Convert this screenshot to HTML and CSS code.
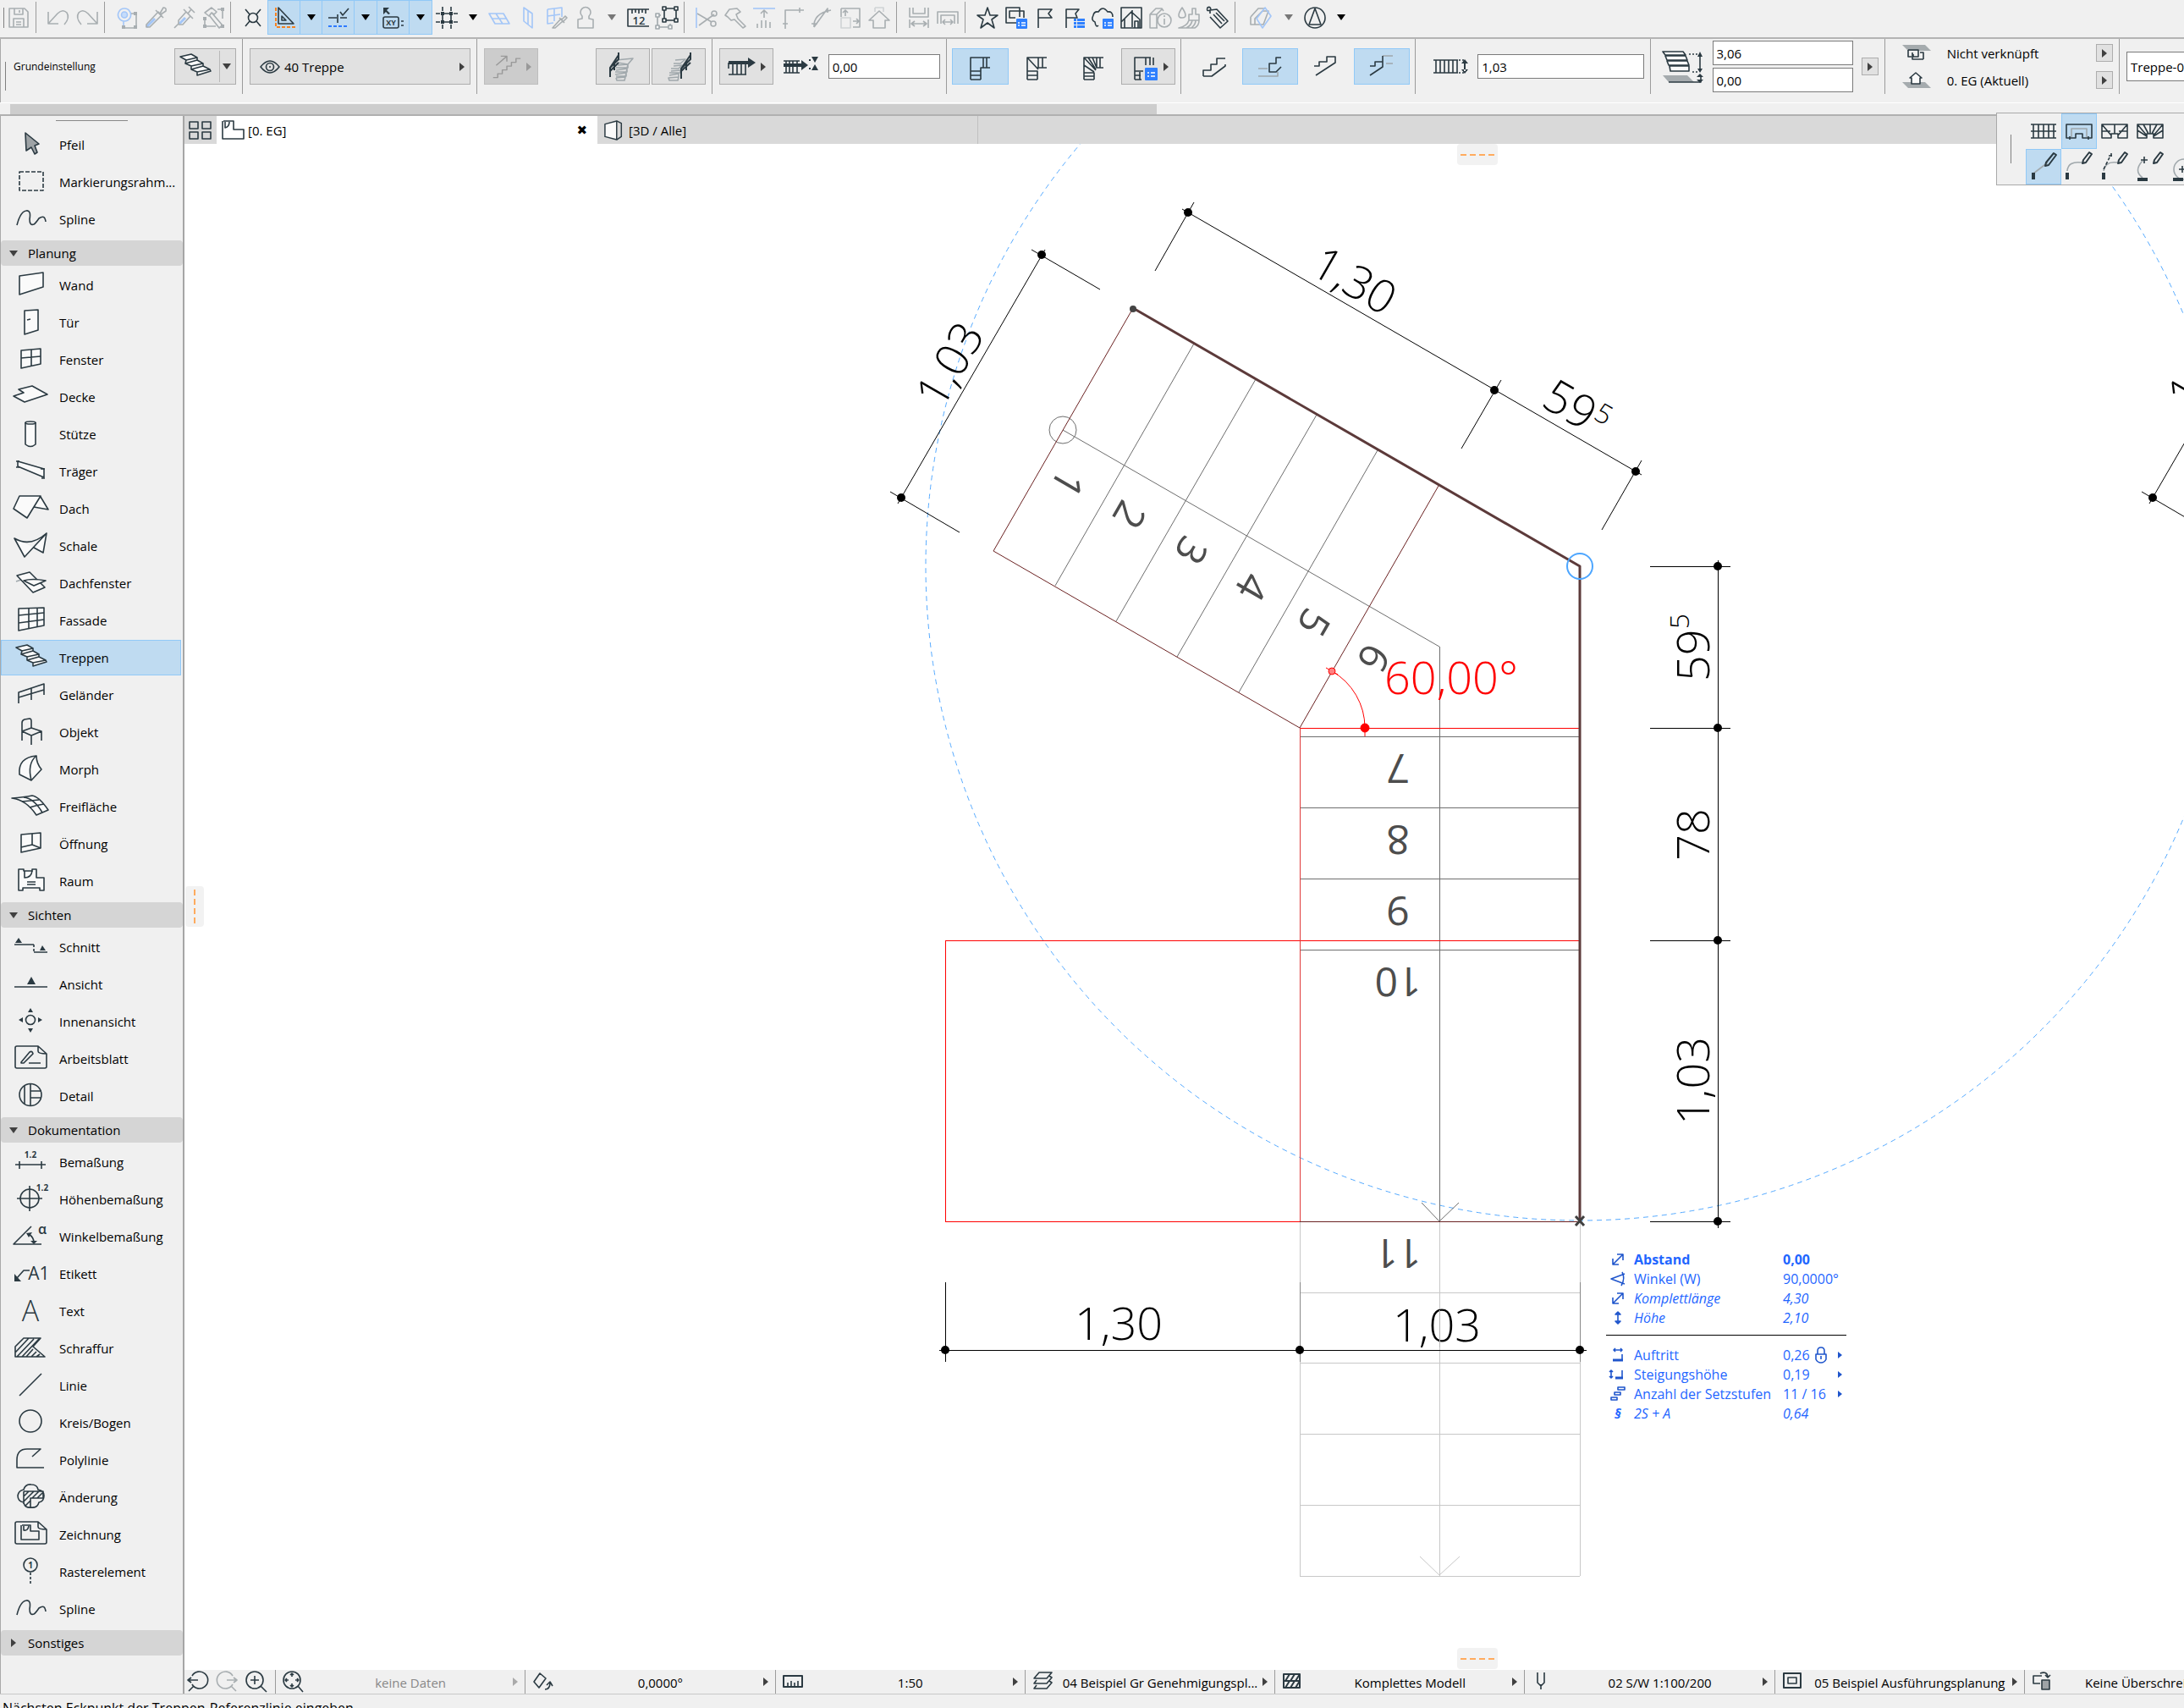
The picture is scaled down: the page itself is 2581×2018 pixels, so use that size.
FILE: index.html
```html
<!DOCTYPE html>
<html lang="de">
<head>
<meta charset="utf-8">
<title>Grundriss – Treppe</title>
<meta name="viewport" content="width=device-width, initial-scale=1">
<link rel="stylesheet" href="styles.css">
</head>
<body>
<header class="toolbar" aria-label="Standardleiste">
  <span class="grip"></span>
  <button class="tool off" aria-label="Sichern"><svg viewBox="0 0 26 26"><path d="M2 2H20L24 6V24H2ZM8 2V9H18V2M14 4V7M7 24V14H19V24M10 18H16M10 21H16"/></svg></button>
  <span class="sep"></span>
  <button class="tool off" aria-label="Rückgängig"><svg viewBox="0 0 26 26"><path d="M1 6V20H13M1 20L12 8Q18 2 23 7Q27 13 20 21"/></svg></button>
  <button class="tool off" aria-label="Wiederholen"><svg viewBox="0 0 26 26"><path d="M25 6V20H13M25 20L14 8Q8 2 3 7Q-1 13 6 21"/></svg></button>
  <span class="sep"></span>
  <button class="tool off" aria-label="Suchen"><svg viewBox="0 0 26 26"><path class="b" d="M10 2a7.500 7.500 0 1 0 .1 0ZM9 17V25"/><circle class="bf" cx="10" cy="9.500" r="3.500"/><path d="M18 8H24V22M10 25H22"/><path class="f" d="M21 6h4v4h-4zM21 22h4v4h-4zM7 22h4v4h-4z"/></svg></button>
  <button class="tool off" aria-label="Aufnehmen"><svg viewBox="0 0 26 26"><path class="b w3" d="M2 24L12 14"/><path d="M2 21L16 6L20 10L6 24H2ZM13 4L22 13M18 8L22 1Q26 1 25 5L19 9"/></svg></button>
  <button class="tool off" aria-label="Übertragen"><svg viewBox="0 0 26 26"><path class="b w3" d="M7 20L14 13"/><path d="M1 25L6 20V16L15 6L20 11L11 21H6M12 3L23 14M17 8L21 3M18 0L25 7"/></svg></button>
  <button class="tool off" aria-label="Bearbeiten"><svg viewBox="0 0 26 26"><path d="M3 7L11 1L17 6L14 9L11 7L8 11ZM12 8L24 22L20 25L9 11M18 3H24V14M3 14V23H16"/><path class="f" d="M1 21h4v4h-4zM22 1h4v4h-4zM22 21h4v4h-4zM1 12h4v4h-4z"/></svg></button>
  <span class="sep"></span>
  <button class="tool" aria-label="Fangpunkt"><svg viewBox="0 0 26 26"><circle cx="13" cy="13" r="5.500"/><path d="M4 3L9 9M22 3L17 9M4 23L9 17M22 23L17 17"/></svg></button>
  <span class="pair">
    <button class="tool on" aria-label="Führungslinien"><svg viewBox="0 0 26 26"><path class="o" d="M3 1V24H26"/><path d="M6 1L24 20H6ZM10 11L15 16H10Z"/></svg></button><button class="drop on" aria-label="Optionen"></button>
  </span>
  <span class="pair">
    <button class="tool on" aria-label="Fanghilfen"><svg viewBox="0 0 26 26"><path d="M1 13H11M15 13H23M12 9V19M15 6L18 10L25 2"/><path class="b3" d="M1 23H25"/></svg></button><button class="drop on" aria-label="Optionen"></button>
  </span>
  <span class="pair">
    <button class="tool on" aria-label="Tracker"><svg viewBox="0 0 26 26"><path class="d" d="M1 1H8L5 4L9 8L7 9L4 6L1 9Z"/><rect x="1" y="12" width="18" height="13" rx="2"/><text x="10" y="22" class="t9">XY</text><path d="M22 17H25M22 22H25"/></svg></button><button class="drop on" aria-label="Optionen"></button>
  </span>
  <button class="tool" aria-label="Raster"><svg viewBox="0 0 26 26"><path d="M8 0V5M8 10V16M8 21V26M18 0V5M18 10V16M18 21V26M0 8H5M10 8H16M21 8H26M0 18H5M10 18H16M21 18H26"/><path class="d" d="M6 6h4v4h-4zM16 6h4v4h-4zM6 16h4v4h-4zM16 16h4v4h-4z"/></svg></button>
  <button class="drop" aria-label="Optionen"></button>
  <button class="tool off" aria-label="Ebene"><svg viewBox="0 0 26 26"><path class="b" d="M1 8H18L25 20H8ZM9 8L17 20M4 14H22"/></svg></button>
  <button class="tool off" aria-label="Vertikale Ebene"><svg viewBox="0 0 26 26"><path class="b" d="M8 1L18 8V25L8 17ZM13 5V21"/></svg></button>
  <button class="tool off" aria-label="Ebene aufnehmen"><svg viewBox="0 0 26 26"><path class="b" d="M2 3L19 1V12M2 3V20L9 19M2 11L17 9M10 2V17"/><path d="M8 25L18 14L20 17L11 25ZM16 13L22 19M19 15L23 11L25 13L21 17"/></svg></button>
  <button class="tool off" aria-label="Schwerkraft"><svg viewBox="0 0 26 26"><path d="M9 11A6 6 0 1 1 17 11V14L22 15V25H4V15L9 14Z"/></svg></button>
  <button class="drop off" aria-label="Optionen"></button>
  <button class="tool" aria-label="Lineal"><svg viewBox="0 0 26 26"><path d="M26 3H1V23H26M6 3V8M10 3V7M14 3V8M18 3V7M22 3V8"/><text x="14" y="21" class="t13">12</text></svg></button>
  <button class="tool" aria-label="Gruppieren"><svg viewBox="0 0 26 26"><path d="M10 2H24V16H10Z"/><path class="l" d="M2 10H6M2 10V24H17V20"/><path class="wf" d="M8 0h4v4h-4zM22 0h4v4h-4zM22 14h4v4h-4zM8 14h4v4h-4z"/><path class="l wf" d="M0 8h4v4h-4zM0 22h4v4h-4zM15 22h4v4h-4z"/></svg></button>
  <span class="sep"></span>
  <button class="tool off" aria-label="Trennen"><svg viewBox="0 0 26 26"><path class="b" d="M1 1V25"/><path d="M2 8L19 18M4 22L22 9"/><circle cx="22" cy="8" r="3"/><circle cx="21" cy="20" r="3"/></svg></button>
  <button class="tool off" aria-label="Anpassen"><svg viewBox="0 0 26 26"><path d="M1 10L6 3L15 2L19 6L14 9L16 14L25 23L22 25L12 15L8 16L4 12Z"/></svg></button>
  <button class="tool off" aria-label="Höhe anpassen"><svg viewBox="0 0 26 26"><path class="b" d="M0 2H26"/><path d="M13 4V13M9 8L13 4L17 8M5 20V25M10 16V25M15 16V25M20 18V25"/></svg></button>
  <button class="tool off" aria-label="Verschneiden"><svg viewBox="0 0 26 26"><path d="M4 26V4H26M1 20H7M21 1V7"/></svg></button>
  <button class="tool off" aria-label="Abrunden"><svg viewBox="0 0 26 26"><path d="M4 24Q3 8 24 4M4 24L20 2V7M1 20H8"/></svg></button>
  <button class="tool off" aria-label="Größe ändern"><svg viewBox="0 0 26 26"><path d="M2 2H24V24H16M2 2V12M7 11V4M4 7L7 4L10 7M16 17H23M20 14L23 17L20 20"/><path class="p" d="M2 13H13V25H2Z"/></svg></button>
  <button class="tool off" aria-label="Dach"><svg viewBox="0 0 26 26"><path d="M8 1H18V6M8 1V6" class="p"/><path d="M1 16L13 5L25 16H20V25H6V16Z"/></svg></button>
  <span class="sep"></span>
  <button class="tool off" aria-label="Abstand außen"><svg viewBox="0 0 26 26"><path d="M2 1V12H24V1M6 1V8H20V1M2 15V25M24 15V25M4 20H22M8 17L4 20L8 23M18 17L22 20L18 23"/></svg></button>
  <button class="tool off" aria-label="Abstand innen"><svg viewBox="0 0 26 26"><path d="M1 20V6H25V20M5 20V10H21V20M7 18H19M10 15L7 18L10 21M16 15L19 18L16 21"/></svg></button>
  <span class="sep"></span>
  <button class="tool" aria-label="Favoriten"><svg viewBox="0 0 26 26"><path d="M13 1L16 10H25L18 15L21 25L13 19L5 25L8 15L1 10H10Z"/></svg></button>
  <button class="tool" aria-label="Kopien"><svg viewBox="0 0 26 26"><path d="M13 19H1V1H17V12M12 13H5V5H22V13"/><rect class="B" x="13" y="14" width="13" height="12" rx="1"/><path class="W" d="M15 19H17M15 22H17M19 19H24M19 22H24"/></svg></button>
  <button class="tool" aria-label="Markierung"><svg viewBox="0 0 26 26"><path d="M5 25V3H21L17 8L21 13H5"/></svg></button>
  <button class="tool" aria-label="Markierungsliste"><svg viewBox="0 0 26 26"><path d="M4 25V3H19L15 8L17 13H4"/><path class="B" d="M13 14h3v3h-3zM13 18h3v3h-3zM13 22h3v3h-3zM17 14h9v3h-9zM17 18h9v3h-9zM17 22h9v3h-9z"/></svg></button>
  <button class="tool" aria-label="Cloud"><svg viewBox="0 0 26 26"><path d="M8 22Q5 25 4 18Q-1 16 2 10Q3 5 8 6Q13 -2 19 6Q25 5 25 12"/><rect class="B" x="13" y="14" width="13" height="12" rx="1"/><path class="W" d="M15 19H17M15 22H17M19 19H24M19 22H24"/></svg></button>
  <button class="tool" aria-label="Haus"><svg viewBox="0 0 26 26"><path d="M1 1H25V25H1ZM1 18L13 6L23 15V25M5 25V14M14 4V24M17 25V17H21V25"/></svg></button>
  <button class="tool off" aria-label="Information"><svg viewBox="0 0 26 26"><path d="M10 25H1V9L8 2H15L17 5M1 9H9V25M9 9L15 3"/><circle cx="18" cy="16" r="8"/><path d="M18 14V21M18 10V12"/></svg></button>
  <button class="tool off" aria-label="Pinsel"><svg viewBox="0 0 26 26"><path d="M5 1Q9 7 9 10Q9 13 5 13Q1 13 1 10Q1 7 5 1ZM17 9V2H21V9H25V16H13V9ZM13 16Q11 23 1 25H20Q25 22 25 16M17 16Q16 22 10 25M21 16Q21 21 16 25"/></svg></button>
  <button class="tool" aria-label="Etikett"><svg viewBox="0 0 26 26"><path d="M4 8V4L12 3L25 17L16 25L4 12M8 9L18 20M11 7L21 17M4 4Q-1 6 1 1Q4 -1 5 3"/></svg></button>
  <span class="sep"></span>
  <button class="tool off wide" aria-label="3D-Schnitt"><svg viewBox="0 0 26 26"><path d="M1 12L10 2H18M1 12V21H12M6 14L15 5H22L16 21H6Z"/><path class="b" d="M8 14L18 1L25 11L15 25Z"/></svg></button>
  <button class="drop off" aria-label="Optionen"></button>
  <button class="tool" aria-label="Norden"><svg viewBox="0 0 26 26"><circle cx="13" cy="13" r="12"/><path d="M13 2L20 21H6Z"/></svg></button>
  <button class="drop" aria-label="Optionen"></button>
</header>

<section class="infobar" aria-label="Infofenster">
  <div class="cell first">
    <span class="grip tall"></span>
    <span class="small">Grundeinstellung</span>
    <button class="btn split" aria-label="Treppe"><svg class="i40" viewBox="0 0 40 30"><use href="#stair"/></svg><span class="bar"></span><i class="down"></i></button>
  </div>
  <div class="cell">
    <button class="btn layer"><svg class="i24" viewBox="0 0 24 20"><path d="M1 10Q12 -4 23 10Q12 24 1 10Z"/><circle cx="12" cy="10" r="4.500"/><circle class="d" cx="12" cy="10" r="1"/></svg>40 Treppe<i class="right"></i></button>
  </div>
  <div class="cell spread">
    <button class="btn gone" aria-label="Laufrichtung"><svg class="i36" viewBox="0 0 40 32"><path d="M2 30H8V25H14V20H20V15H26V10H32V5H38M6 14L20 2M12 2H20V9"/></svg><i class="right"></i></button>
    <span class="twin">
      <button class="btn" aria-label="Geländer links"><svg class="i36" viewBox="0 0 36 36"><path class="l" d="M10 10L30 8L24 15L12 13M12 16L24 15V19L10 19M10 22L23 20V24L9 24M9 27L22 25V29L10 29M10 31L21 30M10 31L11 34H20L21 30L24 15"/><path class="w2" d="M3 30V19L13 9V1M3 19L13 4M8 22V12M3 23L13 13"/></svg></button>
      <button class="btn" aria-label="Geländer rechts"><svg class="i36" viewBox="0 0 36 36"><path class="l" d="M14 10L26 9L20 14L12 14M12 17L22 16L18 20L9 20M9 23L20 22V25L7 25M7 28L18 26V30L6 31L7 34H17L18 30"/><path class="w2" d="M21 32V20L32 9V1M21 20L32 4M27 22V13M21 23L32 13"/></svg></button>
    </span>
  </div>
  <div class="cell spread">
    <button class="btn" aria-label="Ausrichtung"><svg class="i36" viewBox="0 0 36 26"><path d="M8 8V22M13 8V22M18 8V22M23 8V22M3 22H24M3 8V15"/><path class="w3d" d="M3 8H28"/><path class="d" d="M26 2L35 8L26 14Z"/></svg><i class="right"></i></button>
    <svg class="i42" viewBox="0 0 42 26"><path d="M1 6H20M1 20H20M4 6V20M8 6V20M12 6V20M17 6V20"/><path class="w3d" d="M1 11H24"/><path class="d" d="M22 5L30 11L22 17ZM34 1H42L38 8ZM34 17H42L38 10ZM31 4h2v2h-2zM31 14h2v2h-2z"/></svg>
    <input class="field w132" value="0,00" aria-label="Versatz">
  </div>
  <div class="cell quad">
    <button class="btn pick on" aria-label="Podest"><svg class="i36" viewBox="0 0 36 36"><path d="M7 24V7H30M7 12V33M19 33V26M7 23H19V33M7 28H19M7 33H19M22 7V19H30M26 7V19M7 24V7H22V19H19V23"/></svg></button>
    <button class="btn pick" aria-label="Wendelung"><svg class="i36" viewBox="0 0 36 36"><path d="M7 33V7H30M7 23H19V33M7 28H19M7 33H19M20 7V19H30M25 7V19M7 7L20 21M18 19H24"/></svg></button>
    <button class="btn pick" aria-label="Gewendelt"><svg class="i36" viewBox="0 0 36 36"><path d="M7 33V7H30M7 25H19V33M7 29H19M7 33H19M22 7V19H30M26 7V19M7 16L19 24M7 7L21 22M12 7L21 21M17 7L22 19"/></svg></button>
    <button class="btn w64" aria-label="Einstellungen"><svg class="i36" viewBox="0 0 36 36"><path d="M7 33V7H26M7 23H17M7 28H14M7 33H15M13 24V33M20 7V16M25 7V16M29 16V7"/><rect class="B" x="19" y="19" width="15" height="15" rx="1"/><path class="W" d="M22 25H24M22 29H24M26 25H31M26 29H31"/></svg><i class="right"></i></button>
  </div>
  <div class="cell quad">
    <button class="btn pick" aria-label="Anfang 1"><svg class="i30" viewBox="0 0 30 30"><path d="M2 26V19H11V12H18V5H28M2 26H12L28 14V12"/></svg></button>
    <button class="btn pick on" aria-label="Anfang 2"><svg class="i30" viewBox="0 0 30 30"><path class="l" d="M1 17H12M1 26H24V21"/><path d="M28 4H22V11H14V21H22L28 15"/></svg></button>
    <button class="btn pick" aria-label="Ende 1"><svg class="i30" viewBox="0 0 30 30"><path d="M1 14H7V9H16V3H26V10L3 25"/></svg></button>
    <button class="btn pick on" aria-label="Ende 2"><svg class="i30" viewBox="0 0 30 30"><path class="l" d="M16 2H28M20 11H28"/><path d="M1 14H7V9H16V2M16 9V15L1 25"/></svg></button>
  </div>
  <div class="cell width">
    <svg class="i42" viewBox="0 0 42 26"><path d="M1 5H30M1 20H30M4 5V20M9 5V20M14 5V20M19 5V20M24 5V20M29 5V20"/><path class="dot" d="M31 5H38M31 20H38"/><path class="d" d="M34 9L38 4L42 9ZM34 16L38 21L42 16ZM37 8h2v10h-2z"/></svg>
    <input class="field grow" value="1,03" aria-label="Breite">
  </div>
  <div class="cell level">
    <svg class="i50" viewBox="0 0 50 38"><path class="wf" d="M1 1H25L28 5H4ZM4 6H28L30 11H6ZM6 12H30L32 17H8ZM9 18H32V24H10Z"/><path class="g" d="M1 29H30L38 37H8Z"/><path d="M8 37H46V30"/><path class="dot" d="M32 4H42M36 25H42"/><path d="M45 4V24"/><path class="d" d="M42 7L45 1L48 7ZM42 21L45 26L48 21ZM41 31L45 27L49 31ZM41 34L45 38L49 34Z"/></svg>
    <span class="stack"><input class="field" value="3,06" aria-label="Höhe"><input class="field" value="0,00" aria-label="Basishöhe"></span>
    <button class="mini" aria-label="Mehr"><i class="right"></i></button>
  </div>
  <div class="cell links">
    <svg class="i36" viewBox="0 0 36 20"><path class="g" d="M1 0H28L35 7H8Z"/><path d="M8 6H20V14H14V11M26 17H13V9M8 6V14H12M26 17V9H22"/></svg><span>Nicht verknüpft</span><button class="mini" aria-label="Oberes Geschoss"><i class="right"></i></button>
    <svg class="i36" viewBox="0 0 36 20"><path class="g" d="M1 12H28L35 19H8Z"/><path class="wf" d="M12 14V7H10L17 1L24 7H22V14Z"/></svg><span>0. EG (Aktuell)</span><button class="mini" aria-label="Ursprungsgeschoss"><i class="right"></i></button>
  </div>
  <div class="cell last"><input class="field big" value="Treppe-001" aria-label="ID"></div>
</section>
<div class="scroll"><span class="thumb"></span></div>

<main class="work">
  <nav class="tools" aria-label="Werkzeugkasten">
    <ul>
      <li><button><svg viewBox="0 0 44 32"><path class="g2" d="M16 2L32 15L27 17L30 25L27 27L23 19L17 23Z"/></svg>Pfeil</button></li>
      <li><button><svg viewBox="0 0 44 32"><rect x="9" y="4" width="28" height="22" fill="none" stroke-dasharray="5 2"/></svg>Markierungsrahm...</button></li>
      <li><button><svg viewBox="0 0 44 32"><use href="#spline"/></svg>Spline</button></li>
    </ul>
    <h2><button><i class="down"></i>Planung</button></h2>
    <ul>
      <li><button><svg viewBox="0 0 44 32"><path class="wf" d="M9 5L37 1V18L9 27Z"/></svg>Wand</button></li>
      <li><button><svg viewBox="0 0 44 32"><path class="wf" d="M15 2L31 1V25L15 30Z"/><path d="M18 13L22 12"/></svg>Tür</button></li>
      <li><button><svg viewBox="0 0 44 32"><path class="wf" d="M11 5L34 3V21L11 26Z"/><path d="M23 4V23M11 14L34 12"/></svg>Fenster</button></li>
      <li><button><svg viewBox="0 0 44 32"><path class="wf" d="M2 15L15 22L42 13L24 3L8 7L14 11Z"/></svg>Decke</button></li>
      <li><button><svg viewBox="0 0 44 32"><path class="wf" d="M16 2V28Q22 33 28 28V2"/><ellipse class="wf" cx="22" cy="2.500" rx="6" ry="1.500"/></svg>Stütze</button></li>
      <li><button><svg viewBox="0 0 44 32"><path class="wf" d="M7 4L38 13V23L7 10Z"/><path d="M5 4H9M5 11H9M34 13H39M35 24H39"/></svg>Träger</button></li>
      <li><button><svg viewBox="0 0 44 32"><path class="wf" d="M34 2L43 17L26 14M2 16L9 1H34L18 27Z"/></svg>Dach</button></li>
      <li><button><svg viewBox="0 0 44 32"><path class="wf" d="M3 7Q22 18 41 1L37 24L26 18M3 7L15 29L41 1Q22 18 3 7Z"/></svg>Schale</button></li>
      <li><button><svg viewBox="0 0 44 32"><path class="l" d="M5 14L14 11L22 14"/><path class="wf" d="M6 7L21 3L39 21L25 27Z"/><path class="wf" d="M14 13Q24 10 40 13L26 19Z"/></svg>Dachfenster</button></li>
      <li><button><svg viewBox="0 0 44 32"><path class="wf" d="M8 2L38 1V22L8 28Z"/><path d="M20 2V26M30 1V24M8 10L38 7M8 19L38 15"/></svg>Fassade</button></li>
      <li><button class="sel" aria-pressed="true"><svg viewBox="0 0 44 32"><g transform="translate(4 1)"><use href="#stair"/></g></svg>Treppen</button></li>
      <li><button><svg viewBox="0 0 44 32"><path d="M8 26V13L38 3V16M8 19L38 10M23 8V22"/></svg>Geländer</button></li>
      <li><button><svg viewBox="0 0 44 32"><path d="M12 26V5Q12 2 15 1L21 0Q23 0 23 3V11M12 15L23 11L35 15L23 20ZM23 20V31M35 15V26"/></svg>Objekt</button></li>
      <li><button><svg viewBox="0 0 44 32"><path class="wf" d="M9 22Q7 2 29 0Q29 9 35 16L23 29Z"/><path d="M29 0Q18 9 23 29"/></svg>Morph</button></li>
      <li><button><svg viewBox="0 0 44 32"><path class="wf" d="M0 6Q14 5 24 3Q32 4 43 20L29 26Q17 8 0 6Z"/><path d="M12 10Q22 9 32 8M21 17Q30 14 38 13M14 5Q26 6 36 23"/></svg>Freifläche</button></li>
      <li><button><svg viewBox="0 0 44 32"><path class="wf" d="M11 5L34 3V21L11 26Z"/><path d="M24 4V17L34 21M24 17L11 20"/></svg>Öffnung</button></li>
      <li><button><svg viewBox="0 0 44 32"><path class="wf" d="M8 2H14V4H24V2H29V12H38V27H33V24H13V27H8Z"/><path d="M15 4V12Q23 12 24 4M18 17H28M18 20H28"/></svg>Raum</button></li>
    </ul>
    <h2><button><i class="down"></i>Sichten</button></h2>
    <ul>
      <li><button><svg viewBox="0 0 44 32"><path d="M3 13H26M26 22H42"/><path d="M26 13V22" stroke-dasharray="3 2"/><path class="d" d="M4 11L8 5L12 11ZM33 20L36 14L40 20Z"/></svg>Schnitt</button></li>
      <li><button><svg viewBox="0 0 44 32"><path d="M3 19H42"/><path class="d" d="M18 16L23 7L28 16Z"/></svg>Ansicht</button></li>
      <li><button><svg viewBox="0 0 44 32"><circle cx="22" cy="14" r="5.500"/><path class="d" d="M19 5L22 0L25 5ZM19 24L22 29L25 24ZM13 11L8 14L13 17ZM31 11L36 14L31 17Z"/></svg>Innenansicht</button></li>
      <li><button><svg viewBox="0 0 44 32"><path d="M6 1H31L41 10V25Q41 27 39 27H6Q4 27 4 25V3Q4 1 6 1ZM31 1V7Q31 10 41 10M20 21H34M11 20L21 8Q24 6 25 10L14 21H11Z"/></svg>Arbeitsblatt</button></li>
      <li><button><svg viewBox="0 0 44 32"><circle cx="22" cy="14.500" r="13"/><path d="M15 4V25M22 2V27M35 10H22V18H35"/></svg>Detail</button></li>
    </ul>
    <h2><button><i class="down"></i>Dokumentation</button></h2>
    <ul>
      <li><button><svg viewBox="0 0 44 32"><path d="M4 19H40M9 15V24M35 15V24"/><text x="22" y="11" class="t10">1.2</text></svg>Bemaßung</button></li>
      <li><button><svg viewBox="0 0 44 32"><circle cx="21" cy="15" r="11"/><path d="M6 15H36M21 0V30"/><text x="36" y="6" class="t10">1.2</text></svg>Höhenbemaßung</button></li>
      <li><button><svg viewBox="0 0 44 32"><path d="M35 25H2L23 4M20 13Q26 17 26 23"/><path class="d" d="M17 12L24 11L20 17ZM22 21L30 21L26 25Z"/><text x="36" y="13" class="t16">α</text></svg>Winkelbemaßung</button></li>
      <li><button><svg viewBox="0 0 44 32"><path d="M6 21L14 12H21"/><path class="d" d="M3 16V25H11Z"/><text x="32" y="23" class="t20">A1</text></svg>Etikett</button></li>
      <li><button><svg viewBox="0 0 44 32"><text x="22" y="28" class="t34">A</text></svg>Text</button></li>
      <li><button><svg viewBox="0 0 44 32"><path d="M4 26V14L14 4H34L25 14L39 26ZM4 21L20 4M6 26L26 5M12 26L32 5M17 26L25 17M23 26L29 20M29 26L33 23"/></svg>Schraffur</button></li>
      <li><button><svg viewBox="0 0 44 32"><path d="M9 28L35 2"/></svg>Linie</button></li>
      <li><button><svg viewBox="0 0 44 32"><circle cx="22" cy="14" r="13"/></svg>Kreis/Bogen</button></li>
      <li><button><svg viewBox="0 0 44 32"><path d="M38 25H6V16Q6 3 18 3H34L24 12"/></svg>Polylinie</button></li>
      <li><button><svg viewBox="0 0 44 32"><path d="M14 7Q16 0 23 1Q30 1 31 7Q38 8 38 14Q38 21 32 22Q30 29 23 28Q15 29 14 22Q7 21 7 14Q8 8 14 7ZM14 9H37V17H22V28M14 9V24M14 15L20 9M14 21L26 9M16 26L22 20M24 17L32 9M30 17L37 10"/></svg>Änderung</button></li>
      <li><button><svg viewBox="0 0 44 32"><path d="M6 1H31L41 10V25Q41 27 39 27H6Q4 27 4 25V3Q4 1 6 1ZM31 1V7Q31 10 41 10M12 5H22V12H32V22H11V5M14 6V11Q19 12 20 6"/></svg>Zeichnung</button></li>
      <li><button><svg viewBox="0 0 44 32"><circle cx="22" cy="8" r="8"/><text x="22" y="12" class="t10">1</text><path d="M22 17V30" stroke-dasharray="3 2"/></svg>Rasterelement</button></li>
      <li><button><svg viewBox="0 0 44 32"><use href="#spline"/></svg>Spline</button></li>
    </ul>
    <h2><button><i class="right"></i>Sonstiges</button></h2>
  </nav>

  <div class="views">
    <div class="tabs" role="tablist">
      <button class="tab grid" aria-label="Übersicht"><svg viewBox="0 0 28 22"><path d="M1 1h10v8h-10zM16 1h10v8h-10zM1 13h10v8h-10zM16 13h10v8h-10z"/></svg></button>
      <button class="tab active" role="tab" aria-selected="true"><svg viewBox="0 0 28 24"><path d="M2 1H14V11H26V22H1V1M4 2V9Q9 8 9 2"/></svg>[0. EG]<b>✖</b></button>
      <button class="tab" role="tab"><svg viewBox="0 0 28 26"><path class="wf" d="M2 5L17 1V25L2 21Z"/><path d="M17 1L23 4V21L17 25"/></svg>[3D / Alle]</button>
    </div>
    <div class="canvas">
      <svg class="plan" aria-label="Treppengrundriss">
        <g transform="translate(-218 -170)">
          <g class="faint">
            <path d="M1536 1443V1862H1867V1443M1701 1443V1862M1536 1527H1867M1536 1610H1867M1536 1694H1867M1536 1778H1867"/>
          </g>
          <path class="faint aa" d="M1678 1839L1701 1861L1725 1839"/>
          <circle class="orbit" cx="1867" cy="669" r="773"/>
          <g class="tread">
            <path class="aa" d="M1411 406L1247 692M1484 448L1319 734M1556 490L1391 776M1628 532L1464 818M1256 508L1701 764M1680 1421L1701 1443L1724 1421"/>
            <circle class="aa" cx="1256" cy="508" r="16"/>
            <path d="M1536 870H1867M1536 954H1867M1536 1038H1867M1536 1122H1867M1701 764V1443"/>
          </g>
          <path class="brown" d="M1339 364L1174 651L1536 860L1700 574"/>
          <path class="red" d="M1536 860H1867M1536 1111H1117V1443H1536M1536 1111H1867"/>
          <path class="edge" d="M1536 860V1443"/>
          <path class="under" d="M1536 1443H1867"/>
          <path class="wall" d="M1339 364L1867 669V1443"/>
          <circle class="node" cx="1339" cy="365" r="4"/>
          <circle class="handle" cx="1867" cy="669" r="15"/>
          <path class="cross" d="M1862 1437L1872 1448M1872 1437L1862 1448"/>

          <g class="step">
            <text transform="translate(1247 563) rotate(120)">1</text>
            <text transform="translate(1320 600) rotate(120)">2</text>
            <text transform="translate(1393 642) rotate(120)">3</text>
            <text transform="translate(1465 685) rotate(120)">4</text>
            <text transform="translate(1538 727) rotate(120)">5</text>
            <text transform="translate(1609 769) rotate(120)">6</text>
            <text transform="translate(1652 891) rotate(180)">7</text>
            <text transform="translate(1652 975) rotate(180)">8</text>
            <text transform="translate(1652 1059) rotate(180)">9</text>
            <text transform="translate(1652 1143) rotate(180)">10</text>
            <text transform="translate(1652 1464) rotate(180)">11</text>
          </g>

          <g id="dim-left" class="dim">
            <path class="aa" d="M1235 295L1061 595M1219 295L1300 342M1052 581L1134 629"/>
            <circle cx="1231" cy="301" r="5"/><circle cx="1065" cy="588" r="5"/>
            <text transform="translate(1139 440) rotate(-60)">1,03</text>
          </g>
          <use href="#dim-left" x="1479"/>

          <g class="dim">
            <path class="aa" d="M1397 247L1940 561M1411 239L1365 320M1774 449L1727 530M1940 544L1893 626"/>
            <circle cx="1404" cy="251" r="5"/><circle cx="1766" cy="461" r="5"/><circle cx="1933" cy="557" r="5"/>
            <text transform="translate(1591 348) rotate(30)">1,30</text>
            <text transform="translate(1854 499) rotate(30)">59<tspan class="sup" dy="-18">5</tspan></text>

            <path d="M2030 662V1451M1950 669H2045M1950 860H2045M1950 1111H2045M1950 1443H2045"/>
            <circle cx="2030" cy="669" r="5"/><circle cx="2030" cy="860" r="5"/><circle cx="2030" cy="1111" r="5"/><circle cx="2030" cy="1443" r="5"/>
            <text transform="translate(2020 765) rotate(-90)">59<tspan class="sup" dy="-24">5</tspan></text>
            <text transform="translate(2020 986) rotate(-90)">78</text>
            <text transform="translate(2020 1277) rotate(-90)">1,03</text>

            <path d="M1110 1595H1875M1117 1515V1609"/>
            <path class="mute" d="M1536 1515V1609M1867 1515V1609"/>
            <circle cx="1117" cy="1595" r="5"/><circle cx="1536" cy="1595" r="5"/><circle cx="1867" cy="1595" r="5"/>
            <text x="1322" y="1583">1,30</text>
            <text x="1698" y="1585">1,03</text>
          </g>
          <path class="veil" d="M1701 1548V1592"/>

          <g class="angle">
            <path class="aa" d="M1574 793A77 77 0 0 1 1613 860V870M1567 789L1581 797"/>
            <circle class="soft" cx="1574" cy="793" r="4"/><circle cx="1613" cy="860" r="5"/>
            <text x="1636" y="820">60,00°</text>
          </g>
        </g>
      </svg>

      <span class="dock top"></span>
      <span class="dock bottom"></span>
      <span class="dock left"></span>

      <div class="tracker">
        <ul>
          <li class="strong"><svg viewBox="0 0 20 18"><path d="M4 15L16 3M9 3H16V10M4 8V15H11"/></svg><span>Abstand</span><span>0,00</span></li>
          <li><svg viewBox="0 0 20 18"><path d="M18 3L2 9L18 15M15 1Q19 8 14 17"/></svg><span>Winkel (W)</span><span>90,0000°</span></li>
          <li class="calc"><svg viewBox="0 0 20 18"><path d="M4 15L16 3M9 3H16V10M4 8V15H11"/></svg><span>Komplettlänge</span><span>4,30</span></li>
          <li class="calc"><svg viewBox="0 0 20 18"><path d="M10 3V15M7 5L10 2L13 5ZM7 13L10 16L13 13Z"/></svg><span>Höhe</span><span>2,10</span></li>
        </ul>
        <ul>
          <li><svg viewBox="0 0 20 18"><path d="M5 3H15M7 1L5 3L7 5M13 1L15 3L13 5M15 8V15"/><path class="w3" d="M4 15H16"/></svg><span>Auftritt</span><span>0,26</span><svg class="lock" viewBox="0 0 16 20"><path d="M4 9V5Q4 1 8 1Q12 1 12 5V9M2 9H14V15Q12 19 8 19Q4 19 2 15ZM8 11V15"/></svg><button aria-label="Mehr"></button></li>
          <li><svg viewBox="0 0 20 18"><path d="M2 4V13M0 6L2 4L4 6M0 11L2 13L4 11M15 4V13"/><path class="w3" d="M7 13H16"/></svg><span>Steigungshöhe</span><span>0,19</span><button aria-label="Mehr"></button></li>
          <li><svg viewBox="0 0 20 18"><path d="M10 1h8v3h-8zM6 7h7v3h-7zM2 13h7v3h-7z"/></svg><span>Anzahl der Setzstufen</span><span>11 / 16</span><button aria-label="Mehr"></button></li>
          <li class="calc"><b>§</b><span>2S + A</span><span>0,64</span></li>
        </ul>
      </div>
    </div>

    <footer class="status">
      <div class="zooms">
        <button aria-label="Vorheriger Zoom"><svg viewBox="0 0 28 26"><path d="M6 6A10 10 0 1 1 6 16M8 18L2 24M1 11H13M5 8L1 11L5 14"/></svg></button>
        <button class="off" aria-label="Nächster Zoom"><svg viewBox="0 0 28 26"><path d="M20 6A10 10 0 1 0 20 16M18 18L24 24M25 11H13M21 8L25 11L21 14"/></svg></button>
        <button aria-label="Vergrößern"><svg viewBox="0 0 28 26"><circle cx="12" cy="11" r="10"/><path d="M19 18L26 25M7 11H17M12 6V16"/></svg></button>
      </div>
      <button class="opt off"><svg viewBox="0 0 28 26"><circle cx="13" cy="11" r="10"/><path d="M20 18L26 25M13 3V7M13 15V19M5 11H9M17 11H21M11 5L13 3L15 5M11 17L13 19L15 17M7 9L5 11L7 13M19 9L21 11L19 13"/></svg><span>keine Daten</span><i class="right"></i></button>
      <button class="opt"><svg viewBox="0 0 28 26"><path d="M11 3L18 9L10 20L4 13ZM17 22Q23 22 23 14M19 17L23 13L26 18"/></svg><span>0,0000°</span><i class="right"></i></button>
      <button class="opt"><svg viewBox="0 0 28 26"><path class="w2" d="M3 6H25V19H3Z"/><path d="M8 14V18M12 12V18M16 14V18M20 12V18"/></svg><span>1:50</span><i class="right"></i></button>
      <button class="opt"><svg viewBox="0 0 28 26"><path d="M10 2H25L19 9H4ZM22 6L25 8L19 15H4L7 11M22 12L25 14L19 21H4L7 17"/></svg><span>04 Beispiel Gr Genehmigungspl...</span><i class="right"></i></button>
      <button class="opt"><svg viewBox="0 0 28 26"><path class="w2" d="M4 4H23V20H4Z"/><path class="w2" d="M4 12H23M6 12L11 4M12 12L17 4M18 12L23 4M6 20L11 12M12 20L17 12M18 20L23 12"/></svg><span>Komplettes Modell</span><i class="right"></i></button>
      <button class="opt"><svg viewBox="0 0 28 26"><path d="M9 2V14L13 18L17 14V2M13 16V22"/></svg><span>02 S/W 1:100/200</span><i class="right"></i></button>
      <button class="opt"><svg viewBox="0 0 28 26"><path class="w2" d="M4 3H24V20H4Z"/><path d="M9 8H19V15H9Z"/></svg><span>05 Beispiel Ausführungsplanung</span><i class="right"></i></button>
      <button class="opt cut"><svg viewBox="0 0 28 26"><path d="M12 15H4V6H14M12 3Q20 0 21 7M18 5L21 8L24 5"/><path class="g2" d="M14 11H23V22H14Z"/></svg><span>Keine Überschreibungen</span></button>
    </footer>
  </div>
</main>
<p class="message">Nächsten Eckpunkt der Treppen-Referenzlinie eingeben.</p>

<aside class="palette" aria-label="Pet-Palette">
  <span class="grip"></span>
  <div class="rows">
    <div class="row">
      <button aria-label="Gerade"><svg viewBox="0 0 34 34"><path d="M2 9H32M2 25H32M2 17H32M5 9V25M11 9V25M17 9V25M23 9V25M29 9V25"/></svg></button>
      <button class="on" aria-label="Podest"><svg viewBox="0 0 34 34"><path class="l" d="M8 24V14H26V24"/><path d="M2 25V9H32V25H21V20H13V25ZM6 23V27M28 23V27"/></svg></button>
      <button aria-label="Gewinkelt"><svg viewBox="0 0 34 34"><path d="M2 25V9H32V25H21V20H13V25ZM2 9L13 22M32 9L21 22M17 9V20M2 17H12M22 17H32"/></svg></button>
      <button aria-label="Gewendelt"><svg viewBox="0 0 34 34"><path d="M2 25V9H32V25H21V20H13V25ZM2 9L13 22M32 9L21 22M17 9V20M9 9L15 20M25 9L19 20M2 16L13 23M32 16L21 23"/></svg></button>
    </div>
    <div class="row">
      <button class="on" aria-label="Linie"><svg viewBox="0 0 34 34"><path class="l" d="M5 25L22 12"/><path class="w3d" d="M5 24V32"/><path class="w2" d="M20 12L29 1L32 3L23 15L19 16Z"/></svg></button>
      <button aria-label="Bogen"><svg viewBox="0 0 34 34"><path class="l" d="M3 22Q4 10 20 12"/><path class="w3d" d="M3 24V32"/><path class="w2" d="M22 9L29 0L32 2L25 12L21 13Z"/></svg></button>
      <button aria-label="Tangente"><svg viewBox="0 0 34 34"><path class="l" d="M4 22Q6 10 20 12"/><path d="M4 20L11 6M13 1V7M10 4H16" stroke-dasharray="4 2"/><path class="w3d" d="M4 24V32"/><path class="w2" d="M22 9L29 0L32 2L25 12L21 13Z"/></svg></button>
      <button aria-label="Mittelpunkt"><svg viewBox="0 0 34 34"><path class="l" d="M8 10Q-3 22 8 30"/><path d="M10 5V13M6 9H14"/><path class="w3d" d="M2 32H14"/><path class="w2" d="M22 9L29 0L32 2L25 12L21 13Z"/></svg></button>
      <button aria-label="Kreis"><svg viewBox="0 0 34 34"><circle class="l" cx="15" cy="20" r="12"/><path d="M13 16V24M9 20H17"/><path class="w3d" d="M2 32H14"/></svg></button>
    </div>
  </div>
</aside>

<svg class="defs" aria-hidden="true">
  <symbol id="stair" overflow="visible"><path class="wf" d="M1 3L14 0L21 4L8 7ZM8 7L7 11L21 7V4M7 11L14 14L28 11L21 7M14 14V18L28 14V11M14 18L21 21L36 18L28 14M21 21V25L37 20L36 18"/></symbol>
  <symbol id="spline" overflow="visible"><path d="M6 23Q10 7 17 6Q23 5 21 16Q21 24 26 22Q28 21 32 15Q39 10 40 19"/></symbol>
</svg>
</body>
</html>
```

FILE: styles.css
```css
* { box-sizing: border-box; }

:root {
  --ink: #2b3a42;
  --dim: #a8aeb1;
  --sky: #a3c6f8;
  --bar: #f0f0f0;
  --line: #a9a9a9;
  --on: #bfdbf1;
  --on-line: #91c9f7;
  --blue: #1f66ff;
}

body {
  margin: 0;
  height: 100vh;
  display: flex;
  flex-direction: column;
  overflow: hidden;
  background: var(--bar);
  color: #000;
  font: 15px/20px "Open Sans", "Noto Sans", sans-serif;
}

button {
  margin: 0;
  padding: 0;
  border: 0;
  background: none;
  color: inherit;
  font: inherit;
  display: flex;
  align-items: center;
  justify-content: center;
  flex: none;
}

ul { list-style: none; margin: 0; padding: 0; }
h2 { margin: 0; font: inherit; }

svg {
  flex: none;
  overflow: visible;
  fill: none;
  stroke: var(--ink);
  stroke-width: 1.6;
  stroke-linejoin: round;
}

svg text { stroke: none; fill: var(--ink); text-anchor: middle; }
.defs { position: absolute; width: 0; height: 0; }

.d { fill: var(--ink); stroke: none; }
.l { stroke: #a0a8ac; }
.g { fill: #a5abae; stroke: none; }
.g2 { fill: #9ea3a6; }
.wf { fill: #fafafa; }
.w2 { stroke-width: 2; }
.w3 { stroke-width: 3; }
.w3d { stroke-width: 4; }
.b { stroke: var(--sky); }
.bf { fill: #c5dcfb; stroke: var(--sky); }
.b3 { stroke: #2f7bff; stroke-width: 2; stroke-dasharray: 4 2; }
.o { stroke: #f58220; stroke-width: 2; stroke-dasharray: 4 2; }
.p { stroke: #cfd3d5; }
.B { fill: #2f80ff; stroke: none; }
.W { stroke: #fff; }
.dot { stroke-dasharray: 2 2; }
.off svg { stroke: var(--dim); }
.off .f { fill: var(--dim); stroke: none; }
.t9 { font: 700 9px "Open Sans", sans-serif; }
.t10 { font: 700 10px "Open Sans", sans-serif; }
.t13 { font: 600 13px "Open Sans", sans-serif; }
.t16 { font: 600 16px "Open Sans", sans-serif; }
.t20 { font: 400 21px "Open Sans", sans-serif; }
.t34 { font: 300 34px "Open Sans", sans-serif; }

/* arrows */
.down {
  border: 5px solid transparent;
  border-top: 7px solid #404040;
  border-bottom: 0;
}
.right {
  border: 5px solid transparent;
  border-left: 6px solid #404040;
  border-right: 0;
}

/* top toolbar */
.toolbar {
  flex: none;
  display: flex;
  align-items: center;
  height: 46px;
  padding: 0 0 3px 4px;
  border-bottom: 2px solid #b4b4b4;
}
.grip { width: 1px; height: 24px; background: #808080; flex: none; }
.tool { width: 34px; height: 41px; }
.tool.wide { margin: 0 2px 0 4px; }
.tool svg { width: 26px; height: 26px; }
.sep { width: 1px; height: 37px; margin: 0 9px 0 3px; background: #9b9b9b; flex: none; }
.drop { width: 28px; height: 41px; }
.drop::after {
  content: "";
  border: 5px solid transparent;
  border-top: 7px solid #000;
  border-bottom: 0;
}
.drop.off::after { border-top-color: #777; }
.pair { display: flex; flex: none; width: 65px; border: 1px solid var(--on-line); background: var(--on); }
.pair + .pair { border-left: 0; }
.pair .tool { width: 38px; height: 39px; border-right: 1px solid var(--on-line); }
.pair .drop { width: 25px; height: 39px; }

/* info box */
.infobar {
  flex: none;
  display: grid;
  grid-template-columns: 286px repeat(8, minmax(0, 1fr)) 76px;
  height: 75px;
  padding-bottom: 10px;
  border-left: 1px solid var(--line);
}
.cell {
  display: flex;
  align-items: center;
  min-width: 0;
  padding: 0 7px 0 8px;
  border-right: 1px solid #9b9b9b;
}
.cell.first { padding-left: 5px; }
.cell.first .small { margin: 0 auto 0 9px; }
.small { font-size: 12px; }
.grip.tall { height: 34px; margin-top: 22px; }
.spread { justify-content: space-between; }
.twin { display: flex; gap: 2px; }
.btn {
  width: 64px;
  height: 43px;
  gap: 5px;
  border: 1px solid #adadad;
  background: #e1e1e1;
}
.btn.split { width: 73px; gap: 2px; }
.bar { width: 1px; height: 37px; margin: 0 1px 0 5px; background: #b8b8b8; }
.btn.layer { flex: 1; gap: 5px; padding: 0 6px 0 11px; justify-content: flex-start; }
.layer .right { margin-left: auto; }
.btn.gone { background: #cccccc; border-color: #bdbdbd; }
.gone svg { stroke: #999; }
.gone .right { border-left-color: #999; }
.quad { padding: 0 6px; }
.btn.pick { flex: 1; width: auto; border-color: transparent; background: none; }
.btn.pick.on { background: var(--on); border-color: var(--on-line); }
.i24 { width: 24px; height: 20px; }
.i30 { width: 30px; height: 30px; }
.i36 { width: 36px; height: 36px; }
.i40 { width: 40px; height: 30px; }
.i42 { width: 42px; height: 26px; }
.i50 { width: 50px; height: 38px; }
.links .i36 { height: 20px; }
.field {
  height: 29px;
  min-width: 0;
  padding: 0 4px;
  border: 1px solid #7a7a7a;
  border-radius: 0;
  background: #fff;
  color: #000;
  font: inherit;
}
.w132 { width: 132px; }
.grow { flex: 1; }
.width { gap: 11px; padding-left: 20px; }
.level { gap: 10px; padding-left: 13px; }
.stack { flex: 1; min-width: 0; display: flex; flex-direction: column; gap: 3px; }
.stack .field { width: 100%; }
.mini { width: 20px; height: 21px; border: 1px solid #adadad; background: #e1e1e1; }
.links {
  display: grid;
  grid-template-columns: 54px 1fr 20px;
  grid-auto-rows: 32px;
  align-content: center;
  padding-left: 19px;
}
.last { border-right: 0; padding-right: 0; overflow: hidden; }
.field.big { flex: none; width: 180px; height: 35px; }

.scroll {
  flex: none;
  height: 16px;
  padding: 1px 12px 2px;
  border-top: 1px solid #fff;
  border-bottom: 2px solid #b0b0b0;
}
.thumb { display: block; width: 53%; height: 12px; background: #cdcdcd; }

/* work area */
.work { flex: 1; min-height: 0; display: grid; grid-template-columns: 218px 1fr; }
.tools {
  padding-top: 12px;
  border-left: 1px solid var(--line);
  border-right: 2px solid #a6a6a6;
  overflow: hidden;
  background: linear-gradient(#888, #888) 65px 5px / 85px 1px no-repeat;
}
.tools li button {
  width: calc(100% - 2px);
  height: 44px;
  gap: 12px;
  padding-left: 12px;
  justify-content: flex-start;
  white-space: nowrap;
  border: 1px solid transparent;
}
.tools li svg { width: 44px; height: 32px; }
.tools li .sel { height: 42px; margin: 1px 0; background: var(--on); border-color: var(--on-line); }
.tools h2 { margin: 3px 0 1px; }
.tools h2 button {
  width: 100%;
  height: 30px;
  gap: 12px;
  padding-left: 10px;
  justify-content: flex-start;
  border-radius: 4px;
  background: #d5d5d5;
}
.tools h2 .right { margin: 0 2px; }

.views { min-width: 0; min-height: 0; display: flex; flex-direction: column; }
.tabs { flex: none; display: flex; height: 33px; background: #d9d9d9; }
.tab { width: 450px; gap: 3px; padding: 0 7px 0 6px; justify-content: flex-start; border-right: 1px solid #c0c0c0; }
.tab svg { width: 28px; height: 24px; }
.tab.grid { width: 38px; justify-content: center; border: 0; }
.tab.active { background: #fff; border: 0; }
.tab b { margin: 0 5px 0 auto; font: 700 15px/20px "DejaVu Sans", sans-serif; }

.canvas { position: relative; flex: 1; min-height: 0; overflow: hidden; background: #fff; }
.plan { display: block; width: 100%; height: 100%; stroke-width: 1; shape-rendering: crispEdges; }
.plan .aa { shape-rendering: auto; }
.plan text { font: 300 54px "Open Sans", "Noto Sans", sans-serif; }
.faint { stroke: #c8c8c8; }
.tread { stroke: #6e6e6e; }
.orbit { stroke: #55aaff; stroke-dasharray: 6 5; shape-rendering: auto; }
.brown { stroke: #6b2222; shape-rendering: auto; }
.red { stroke: #ff0000; }
.edge { stroke: #e03a3a; }
.under { stroke: #6b2222; }
.wall { stroke: #5c3a3a; stroke-width: 3; shape-rendering: auto; }
.node { fill: #444; stroke: none; shape-rendering: auto; }
.handle { stroke: #4da6ff; stroke-width: 2; shape-rendering: auto; }
.cross { stroke: #404040; stroke-width: 3; shape-rendering: auto; }
.dim { stroke: #000; }
.dim circle { fill: #000; stroke: none; shape-rendering: auto; }
.dim text { fill: #000; }
.dim .mute { stroke: #888; }
.plan .sup { font-size: 32px; }
.plan .step text { font-size: 48px; font-weight: 400; fill: #4d4d4d; }
.veil { stroke: #b5b5b5; }
.angle { stroke: #ff0000; }
.angle circle { fill: #ff0000; shape-rendering: auto; }
.angle .soft { fill: #ff8080; }
.angle text { fill: #ff0000; text-anchor: start; }

/* docking handles */
.dock { position: absolute; background: #f2f2f2; border-radius: 4px; }
.dock::after { content: ""; position: absolute; inset: 0; margin: auto; }
.dock.top, .dock.bottom { left: 1504px; width: 48px; height: 25px; }
.dock.top { top: 0; }
.dock.bottom { bottom: 1px; }
.dock.left { left: 1px; top: 877px; width: 22px; height: 48px; }
.dock.top::after, .dock.bottom::after {
  width: 40px; height: 2px;
  background: repeating-linear-gradient(90deg, #ffab5e 0 7px, transparent 7px 11px);
}
.dock.left::after {
  width: 2px; height: 40px;
  background: repeating-linear-gradient(#ffab5e 0 7px, transparent 7px 11px);
}

/* input tracker */
.tracker {
  position: absolute;
  left: 1680px;
  top: 1306px;
  width: 284px;
  color: var(--blue);
  font-size: 16px;
}
.tracker ul + ul { margin-top: 9px; padding-top: 11px; border-top: 1px solid #000; }
.tracker li {
  display: grid;
  grid-template-columns: 20px 175px 32px 16px 12px;
  column-gap: 5px;
  align-items: center;
  height: 23px;
  padding-left: 4px;
  white-space: nowrap;
}
.tracker li > span:nth-child(2) { margin-left: 4px; }
.tracker svg { width: 20px; height: 18px; stroke: #1f55cc; }
.tracker .lock { width: 16px; height: 20px; }
.tracker li > b { text-align: center; }
.strong { font-weight: 700; }
.calc { font-style: italic; }
.tracker button { grid-column: 5; justify-content: flex-end; }
.tracker button::after {
  content: "";
  border: 4px solid transparent;
  border-left: 5px solid #1f55cc;
  border-right: 0;
}

/* view options at the bottom */
.status {
  flex: none;
  display: grid;
  grid-template-columns: 108px repeat(7, minmax(0, 1fr)) 188px;
  height: 28px;
}
.zooms { display: flex; align-items: center; gap: 6px; padding-left: 3px; border-right: 1px solid #9b9b9b; }
.status svg { width: 28px; height: 26px; }
.opt { min-width: 0; padding: 0 8px 0 6px; border-right: 1px solid #9b9b9b; overflow: hidden; white-space: nowrap; }
.opt span { flex: 1; padding: 2px 0 0 4px; text-align: center; }
.opt.off { color: #888; }
.opt.off svg { stroke: var(--ink); }
.opt.off .right { border-left-color: #aaa; }
.opt.cut { justify-content: flex-start; border-right: 0; }
.opt.cut span { flex: none; padding-left: 37px; }

.message {
  flex: none;
  height: 17px;
  margin: 0;
  padding: 6px 3px 0;
  border-top: 1px solid #c8c8c8;
  overflow: hidden;
  white-space: nowrap;
  font-size: 16px;
}

/* floating palette */
.palette {
  position: absolute;
  right: 0;
  top: 133px;
  width: 222px;
  height: 86px;
  display: flex;
  align-items: center;
  padding-left: 16px;
  gap: 17px;
  overflow: hidden;
  border: 1px solid var(--line);
  border-right: 0;
  background: var(--bar);
}
.palette .grip { height: 34px; }
.row { display: flex; }
.row button { width: 42px; height: 42px; border: 1px solid transparent; }
.row .on { background: var(--on); border-color: var(--on-line); }
.row svg { width: 34px; height: 34px; }
```
